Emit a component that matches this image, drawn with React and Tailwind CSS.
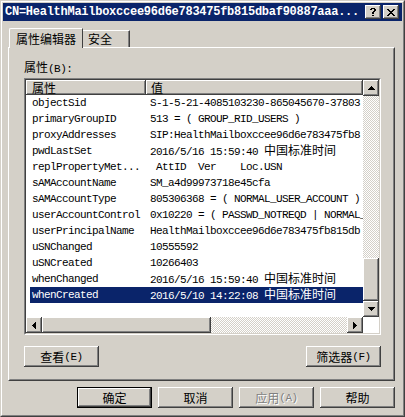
import React from "react";

const raised =
  "shadow-[inset_-1px_-1px_0_#404040,inset_1px_1px_0_#ffffff,inset_-2px_-2px_0_#808080,inset_2px_2px_0_#d4d0c8]";
const checker =
  "bg-[image:repeating-conic-gradient(#d4d0c8_0%_25%,#ffffff_0%_50%)] bg-[length:2px_2px]";
const mono = "[font-family:'Liberation_Mono','Noto_Sans_CJK_SC',monospace]";
const cjk = "[font-family:'Noto_Sans_CJK_SC','Liberation_Mono',sans-serif]";

function Tri({ dir }) {
  const rows = [
    [3, 1],
    [2, 3],
    [1, 5],
    [0, 7],
  ];
  if (dir === "up" || dir === "down") {
    return (
      <svg width="7" height="4" shapeRendering="crispEdges">
        {rows.map(([x, w], i) => (
          <rect key={i} x={x} y={dir === "up" ? i : 3 - i} width={w} height="1" fill="#000" />
        ))}
      </svg>
    );
  }
  return (
    <svg width="4" height="7" shapeRendering="crispEdges">
      {rows.map(([y, h], i) => (
        <rect key={i} y={y} x={dir === "left" ? i : 3 - i} height={h} width="1" fill="#000" />
      ))}
    </svg>
  );
}

function ArrowBtn({ dir }) {
  return (
    <div className={`w-[16px] h-[16px] shrink-0 bg-[#d4d0c8] flex items-center justify-center ${raised}`}>
      <Tri dir={dir} />
    </div>
  );
}

function HelpGlyph() {
  const px = [
    [1, 0, 4],
    [0, 1, 2],
    [4, 1, 2],
    [4, 2, 2],
    [3, 3, 2],
    [2, 4, 2],
    [2, 5, 2],
    [2, 7, 2],
  ];
  return (
    <svg width="6" height="8" shapeRendering="crispEdges">
      {px.map(([x, y, w], i) => (
        <rect key={i} x={x} y={y} width={w} height="1" fill="#000" />
      ))}
    </svg>
  );
}

function CloseGlyph() {
  const px = [
    [0, 0], [6, 0],
    [1, 1], [5, 1],
    [2, 2], [4, 2],
    [3, 3],
    [2, 4], [4, 4],
    [1, 5], [5, 5],
    [0, 6], [6, 6],
  ];
  return (
    <svg width="8" height="7" shapeRendering="crispEdges">
      {px.map(([x, y], i) => (
        <rect key={i} x={x} y={y} width="2" height="1" fill="#000" />
      ))}
    </svg>
  );
}

function TitleBtn({ children }) {
  return (
    <div className={`w-[16px] h-[14px] bg-[#d4d0c8] flex items-center justify-center ${raised}`}>
      {children}
    </div>
  );
}

function Btn({ children, isDefault, disabled }) {
  if (isDefault) {
    return (
      <div className="w-[75px] h-[21px] border border-black bg-[#d4d0c8]">
        <div
          className={`w-full h-full flex items-center justify-center text-[12px] leading-[16px] ${cjk} shadow-[inset_-1px_-1px_0_#404040,inset_1px_1px_0_#ffffff,inset_-2px_-2px_0_#808080]`}
        >
          {children}
        </div>
      </div>
    );
  }
  return (
    <div
      className={`w-[75px] h-[21px] bg-[#d4d0c8] flex items-center justify-center text-[12px] leading-[16px] ${cjk} ${raised} ${
        disabled ? "text-[#808080] [text-shadow:1px_1px_0_#ffffff]" : "text-black"
      }`}
    >
      {children}
    </div>
  );
}

function Mn({ children }) {
  return <span className={`text-[11px] ${mono} tracking-[-0.5px]`}>{children}</span>;
}

const ZH = "中国标准时间";

const rows = [
  ["objectSid", "S-1-5-21-4085103230-865045670-37803"],
  ["primaryGroupID", "513 = ( GROUP_RID_USERS )"],
  ["proxyAddresses", "SIP:HealthMailboxccee96d6e783475fb8"],
  ["pwdLastSet", "2016/5/16 15:59:40 ", true],
  ["replPropertyMet...", " AttID  Ver    Loc.USN"],
  ["sAMAccountName", "SM_a4d99973718e45cfa"],
  ["sAMAccountType", "805306368 = ( NORMAL_USER_ACCOUNT )"],
  ["userAccountControl", "0x10220 = ( PASSWD_NOTREQD | NORMAL_"],
  ["userPrincipalName", "HealthMailboxccee96d6e783475fb815db"],
  ["uSNChanged", "10555592"],
  ["uSNCreated", "10266403"],
  ["whenChanged", "2016/5/16 15:59:40 ", true],
  ["whenCreated", "2016/5/10 14:22:08 ", true, true],
];

export default function App() {
  return (
    <div className="w-[405px] h-[417px] bg-[#d4d0c8] border border-t-[#d4d0c8] border-l-[#d4d0c8] border-r-[#404040] border-b-[#404040] text-black">
      <div className="h-full flex flex-col border border-t-white border-l-white border-r-[#808080] border-b-[#808080] p-px">
        {/* Title bar */}
        <div className="h-[18px] shrink-0 bg-[#0a246a] flex items-center pl-[2px] pr-[3px]">
          <div className="flex-1 min-w-0 text-white font-bold text-[12px] leading-[18px] tracking-[-0.26px] whitespace-nowrap overflow-hidden [font-family:'Liberation_Mono',monospace]">
            CN=HealthMailboxccee96d6e783475fb815dbaf90887aaa...
          </div>
          <div className="flex gap-[2px]">
            <TitleBtn>
              <HelpGlyph />
            </TitleBtn>
            <TitleBtn>
              <CloseGlyph />
            </TitleBtn>
          </div>
        </div>

        {/* Body */}
        <div className="flex-1 flex flex-col pt-[7px] pl-[5px] pr-[7px]">
          {/* Tabs */}
          <div className="h-[19px] flex items-end pl-[1px]">
            <div
              className={`relative z-10 w-[74px] h-[20px] -mb-px bg-[#d4d0c8] border-t border-l border-r border-t-white border-l-white border-r-[#404040] rounded-tl-[2px] flex items-center justify-center text-[12px] leading-[16px] ${cjk}`}
            >
              属性编辑器
            </div>
            <div
              className={`w-[47px] h-[17px] bg-[#d4d0c8] border-t border-r border-t-white border-r-[#404040] shadow-[inset_-1px_0_0_#808080] flex items-center pl-[5px] text-[12px] leading-[16px] ${cjk}`}
            >
              安全
            </div>
          </div>

          {/* Panel */}
          <div className="h-[334px] border border-t-white border-l-white border-r-[#404040] border-b-[#404040]">
            <div className="h-full flex flex-col border border-t-[#d4d0c8] border-l-[#d4d0c8] border-r-[#808080] border-b-[#808080] pt-[11px] pl-[14px] pr-[12px]">
              <div className={`h-[14px] leading-[14px] mb-[4px] text-[12px] ${cjk}`}>
                属性<Mn>(B):</Mn>
              </div>

              {/* List box */}
              <div className="h-[257px] border border-t-[#808080] border-l-[#808080] border-r-white border-b-white">
                <div className="h-full flex flex-col border border-t-[#404040] border-l-[#404040] border-r-[#d4d0c8] border-b-[#d4d0c8]">
                  <div className="h-[237px] flex">
                    <div className="w-[337px] bg-white overflow-hidden">
                      <div className={`h-[15px] flex text-[12px] leading-[15px] ${cjk}`}>
                        <div className={`w-[120px] shrink-0 pl-[6px] bg-[#d4d0c8] ${raised}`}>属性</div>
                        <div className={`flex-1 pl-[5px] bg-[#d4d0c8] ${raised}`}>值</div>
                      </div>
                      {rows.map(([k, v, zh, sel]) => (
                        <div
                          key={k}
                          className={`h-[16px] leading-[16px] ml-[4px] flex items-center whitespace-pre overflow-hidden ${
                            sel ? "bg-[#0a246a] text-white" : "text-black"
                          }`}
                        >
                          <div className={`w-[116px] shrink-0 pl-[2px] text-[11px] leading-[16px] tracking-[-0.6px] ${mono}`}>{k}</div>
                          <div className={`pl-[4px] text-[11px] leading-[16px] tracking-[-0.6px] ${mono}`}>
                            {v}
                            {zh ? (
                              <span className={`text-[12px] leading-[16px] tracking-normal ${cjk}`}>{ZH}</span>
                            ) : null}
                          </div>
                        </div>
                      ))}
                    </div>
                    <div className="w-[16px] flex flex-col">
                      <ArrowBtn dir="up" />
                      <div className={`flex-1 ${checker}`} />
                      <div className={`h-[43px] shrink-0 bg-[#d4d0c8] ${raised}`} />
                      <ArrowBtn dir="down" />
                    </div>
                  </div>
                  <div className="h-[16px] flex">
                    <ArrowBtn dir="left" />
                    <div className={`w-[169px] shrink-0 bg-[#d4d0c8] ${raised}`} />
                    <div className={`w-[136px] shrink-0 ${checker}`} />
                    <ArrowBtn dir="right" />
                    <div className="w-[16px] bg-white" />
                  </div>
                </div>
              </div>

              <div className="mt-[11px] flex justify-between">
                <Btn>
                  查看<Mn>(E)</Mn>
                </Btn>
                <Btn>
                  筛选器<Mn>(F)</Mn>
                </Btn>
              </div>
            </div>
          </div>

          {/* Bottom buttons */}
          <div className="mt-[6px] flex justify-end gap-[6px]">
            <Btn isDefault>确定</Btn>
            <Btn>取消</Btn>
            <Btn disabled>
              应用<Mn>(A)</Mn>
            </Btn>
            <Btn>帮助</Btn>
          </div>
        </div>
      </div>
    </div>
  );
}
